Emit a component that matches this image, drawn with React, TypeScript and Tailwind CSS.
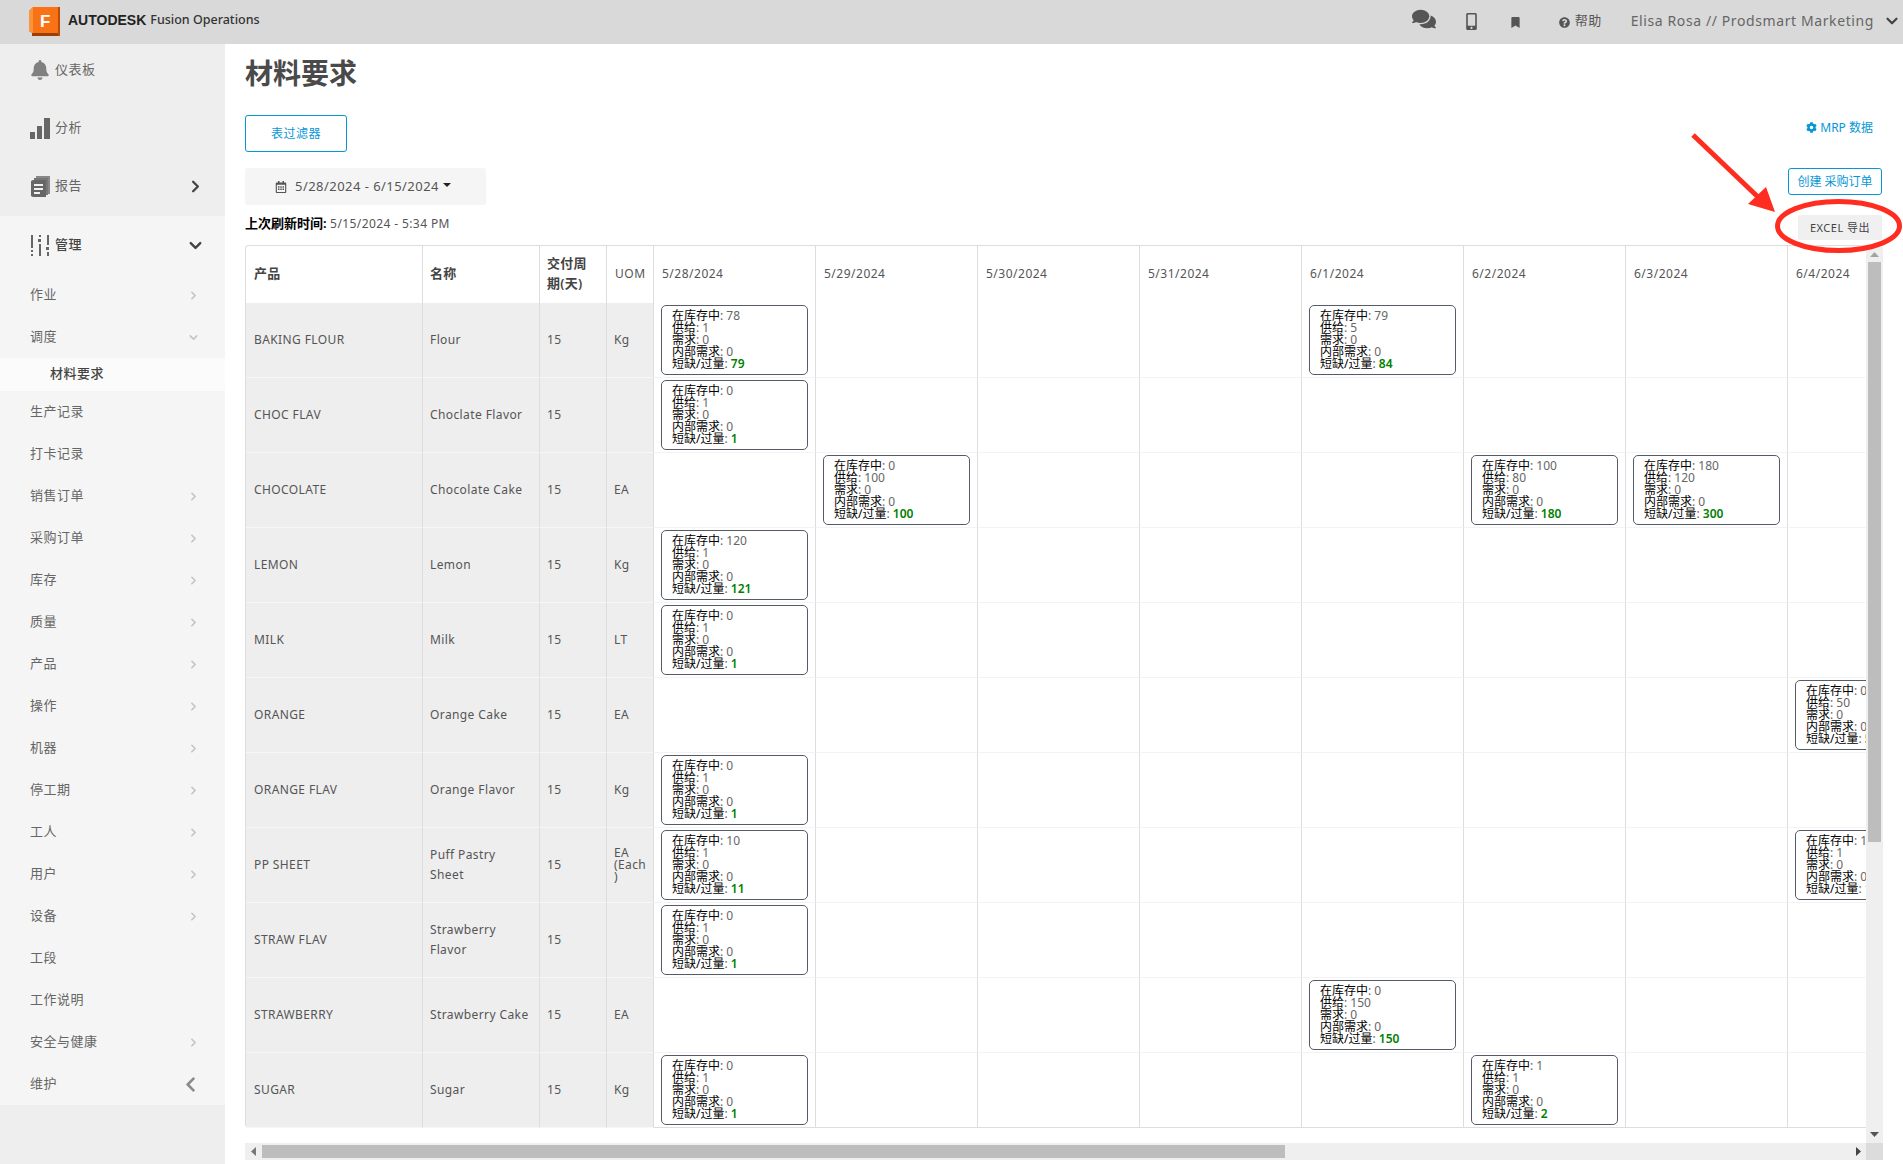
import { ChevronDown, ChevronRight } from 'lucide-react';
import {
  FaBell,
  FaBookmark,
  FaChevronLeft,
  FaCog,
  FaComments,
  FaMobileAlt,
  FaQuestionCircle,
  FaRegCalendarAlt,
} from 'react-icons/fa';

const FONT = { fontFamily: '"Noto Sans", "Noto Sans CJK SC", sans-serif' };

const DATES = ['5/28/2024', '5/29/2024', '5/30/2024', '5/31/2024', '6/1/2024', '6/2/2024', '6/3/2024', '6/4/2024', '6/5/2024'];

type Stock = [number, number, number, number, number];

interface Row {
  code: string;
  name: string;
  uom: string;
  cards: Record<string, Stock>;
}

const ROWS: Row[] = [
  { code: 'BAKING FLOUR', name: 'Flour', uom: 'Kg', cards: { '5/28/2024': [78, 1, 0, 0, 79], '6/1/2024': [79, 5, 0, 0, 84] } },
  { code: 'CHOC FLAV', name: 'Choclate Flavor', uom: '', cards: { '5/28/2024': [0, 1, 0, 0, 1] } },
  {
    code: 'CHOCOLATE',
    name: 'Chocolate Cake',
    uom: 'EA',
    cards: { '5/29/2024': [0, 100, 0, 0, 100], '6/2/2024': [100, 80, 0, 0, 180], '6/3/2024': [180, 120, 0, 0, 300] },
  },
  { code: 'LEMON', name: 'Lemon', uom: 'Kg', cards: { '5/28/2024': [120, 1, 0, 0, 121] } },
  { code: 'MILK', name: 'Milk', uom: 'LT', cards: { '5/28/2024': [0, 1, 0, 0, 1] } },
  { code: 'ORANGE', name: 'Orange Cake', uom: 'EA', cards: { '6/4/2024': [0, 50, 0, 0, 50] } },
  { code: 'ORANGE FLAV', name: 'Orange Flavor', uom: 'Kg', cards: { '5/28/2024': [0, 1, 0, 0, 1] } },
  { code: 'PP SHEET', name: 'Puff Pastry Sheet', uom: 'EA (Each)', cards: { '5/28/2024': [10, 1, 0, 0, 11], '6/4/2024': [11, 1, 0, 0, 12] } },
  { code: 'STRAW FLAV', name: 'Strawberry Flavor', uom: '', cards: { '5/28/2024': [0, 1, 0, 0, 1] } },
  { code: 'STRAWBERRY', name: 'Strawberry Cake', uom: 'EA', cards: { '6/1/2024': [0, 150, 0, 0, 150] } },
  { code: 'SUGAR', name: 'Sugar', uom: 'Kg', cards: { '5/28/2024': [0, 1, 0, 0, 1], '6/2/2024': [1, 1, 0, 0, 2] } },
];

const SUB_TOP = [
  { label: '作业', arrow: 'right' },
  { label: '调度', arrow: 'down' },
];

const SUB_BOTTOM = [
  { label: '生产记录' },
  { label: '打卡记录' },
  { label: '销售订单', arrow: 'right' },
  { label: '采购订单', arrow: 'right' },
  { label: '库存', arrow: 'right' },
  { label: '质量', arrow: 'right' },
  { label: '产品', arrow: 'right' },
  { label: '操作', arrow: 'right' },
  { label: '机器', arrow: 'right' },
  { label: '停工期', arrow: 'right' },
  { label: '工人', arrow: 'right' },
  { label: '用户', arrow: 'right' },
  { label: '设备', arrow: 'right' },
  { label: '工段' },
  { label: '工作说明' },
  { label: '安全与健康', arrow: 'right' },
];

const Logo = () => (
  <svg width="32" height="30" viewBox="0 0 32 30" className="mt-[2px]">
    <polygon points="0,4 4,0 30,0 30,26 3,26 0,24" fill="#f97316" />
    <polygon points="0,4 4,0 4,26 0,24" fill="#fb923c" />
    <polygon points="3,26 30,26 31,22 31,29 3,29" fill="#9a3f05" />
    <rect x="29" y="0" width="2" height="29" fill="#b84d08" />
    <text x="11" y="20" fill="#ffffff" fontSize="17" fontWeight="700" fontFamily="Liberation Sans, sans-serif">F</text>
  </svg>
);

const AnalyticsIcon = () => (
  <svg width="20" height="21" viewBox="0 0 20 21" fill="#666666">
    <rect x="0" y="14" width="5" height="7" />
    <rect x="7" y="8" width="5" height="13" />
    <rect x="14" y="0" width="6" height="21" />
  </svg>
);

const ReportIcon = () => (
  <svg width="19" height="21" viewBox="0 0 19 21" className="ml-px">
    <path d="M5 0h14v18h-2V2H5z" fill="#888888" />
    <path d="M3 2h14v17h-2V4H3z" fill="#777777" />
    <path d="M0 5l2-1h13v17H2l-2-1z" fill="#666666" />
    <rect x="3" y="8" width="9" height="2" fill="#f0f0f0" />
    <rect x="3" y="12" width="9" height="2" fill="#f0f0f0" />
    <rect x="3" y="16" width="6" height="2" fill="#f0f0f0" />
  </svg>
);

const SlidersIcon = () => (
  <svg width="18" height="21" viewBox="0 0 18 21" fill="#666666" className="ml-px">
    <rect x="0" y="0" width="2" height="13" />
    <rect x="0" y="15" width="2" height="2" />
    <rect x="0" y="19" width="2" height="2" />
    <rect x="8" y="0" width="2" height="2" />
    <rect x="7" y="4" width="3" height="3" />
    <rect x="8" y="9" width="2" height="12" />
    <rect x="16" y="0" width="2" height="10" />
    <rect x="15" y="12" width="3" height="3" />
    <rect x="16" y="17" width="2" height="4" />
  </svg>
);

const TopItem = ({ icon, label, arrow, bold }: { icon: React.ReactNode; label: string; arrow?: 'right' | 'down'; bold?: boolean }) => (
  <div className="flex h-[58px] items-center pl-[30px] pr-[20px]">
    <div className="flex w-[25px] items-center">{icon}</div>
    <span className={`flex-1 text-[13px] tracking-[0.5px] ${bold ? 'font-medium text-[#444444]' : 'text-[#666666]'}`}>{label}</span>
    {arrow === 'right' && <ChevronRight size={19} strokeWidth={3} className="text-[#444444]" />}
    {arrow === 'down' && <ChevronDown size={19} strokeWidth={3} className="text-[#444444]" />}
  </div>
);

const SubItem = ({ label, arrow }: { label: string; arrow?: string }) => (
  <div className="flex h-[42px] items-center pl-[30px] pr-[25px]">
    <span className="flex-1 text-[13px] tracking-[0.5px] text-[#666666]">{label}</span>
    {arrow === 'right' && <ChevronRight size={13} strokeWidth={3} className="text-[#c4c4c4]" />}
    {arrow === 'down' && <ChevronDown size={13} strokeWidth={3} className="text-[#c4c4c4]" />}
  </div>
);

const Sidebar = () => (
  <aside className="flex w-[225px] shrink-0 flex-col bg-[#eeeeee]">
    <div className="h-[172px]">
      <div className="-mt-[3px]">
        <TopItem icon={<FaBell size={20} className="text-[#808080]" />} label="仪表板" />
        <TopItem icon={<AnalyticsIcon />} label="分析" />
        <TopItem icon={<ReportIcon />} label="报告" arrow="right" />
      </div>
    </div>
    <div className="bg-[#f5f5f5]">
      <TopItem icon={<SlidersIcon />} label="管理" arrow="down" bold />
      {SUB_TOP.map((item) => (
        <SubItem key={item.label} {...item} />
      ))}
      <div className="flex h-[33px] items-center bg-[#fbfbfb] pb-[2px] pl-[50px] text-[13px] font-medium tracking-[0.5px] text-[#444444]">材料要求</div>
      {SUB_BOTTOM.map((item) => (
        <SubItem key={item.label} {...item} />
      ))}
      <div className="flex h-[42px] items-center pl-[30px] pr-[26px]">
        <span className="flex-1 text-[13px] tracking-[0.5px] text-[#666666]">维护</span>
        <FaChevronLeft size={17} className="text-[#8a8a8a]" />
      </div>
    </div>
  </aside>
);

const StockCard = ({ stock }: { stock: Stock }) => {
  const rows: [string, number][] = [
    ['在库存中', stock[0]],
    ['供给', stock[1]],
    ['需求', stock[2]],
    ['内部需求', stock[3]],
  ];
  return (
    <div className="h-[70px] w-[147px] rounded-[5px] border border-[#555c68] bg-white pl-[10px] pt-[4px] text-[12px] leading-[12px] text-[#666666]">
      {rows.map(([label, value]) => (
        <div key={label} className="whitespace-nowrap">
          <span className="text-black">{label}</span>: {value}
        </div>
      ))}
      <div className="whitespace-nowrap">
        <span className="text-black">短缺/过量</span>: <span className="font-semibold text-[#008000]">{stock[4]}</span>
      </div>
    </div>
  );
};

const HEAD = 'border-r border-[#dddddd] text-left align-middle leading-[20px]';
const HEAD_BOLD = `${HEAD} px-[7px] pb-[3px] text-[13px] font-semibold tracking-[0.3px] text-[#444444]`;
const HEAD_PLAIN = `${HEAD} px-[8px] pb-[1px] text-[12px] font-normal tracking-[0.5px] text-[#555555]`;
const FIXED = 'border-r border-b border-r-[#dddddd] border-b-[#f7f7f7] bg-[#eeeeee] pl-[7px] pr-[4px] align-middle text-[12px] leading-[20px] tracking-[0.4px] text-[#555555]';

const StockTable = () => (
  <div className="w-fit rounded-l-[4px] border-t border-l border-[#dddddd]">
    <table className="w-[1866px] table-fixed border-separate border-spacing-0" style={FONT}>
      <colgroup>
        <col className="w-[177px]" />
        <col className="w-[117px]" />
        <col className="w-[67px]" />
        <col className="w-[47px]" />
        {DATES.map((d) => (
          <col key={d} className="w-[162px]" />
        ))}
      </colgroup>
      <thead>
        <tr className="h-[57px]">
          <th className={`${HEAD_BOLD} !pl-[8px]`}>产品</th>
          <th className={HEAD_BOLD}>名称</th>
          <th className={HEAD_BOLD}>交付周期(天)</th>
          <th className={HEAD_PLAIN}>UOM</th>
          {DATES.map((d) => (
            <th key={d} className={HEAD_PLAIN}>{d}</th>
          ))}
        </tr>
      </thead>
      <tbody>
        {ROWS.map((row, i) => {
          const last = i === ROWS.length - 1;
          const bottom = last ? 'border-b-[#dddddd]' : '';
          return (
            <tr key={row.code} className="h-[75px]">
              <td className={`${FIXED} ${bottom} !pl-[8px]`}>{row.code}</td>
              <td className={`${FIXED} ${bottom} !pr-[9px]`}>{row.name}</td>
              <td className={`${FIXED} ${bottom}`}>15</td>
              <td className={`${FIXED} ${bottom} !leading-[12px] break-words`}>{row.uom}</td>
              {DATES.map((d) => (
                <td key={d} className={`border-r border-b border-r-[#dddddd] px-[7px] align-middle ${last ? 'border-b-[#dddddd]' : 'border-b-[#f3f3f3]'}`}>
                  {row.cards[d] && <StockCard stock={row.cards[d]} />}
                </td>
              ))}
            </tr>
          );
        })}
      </tbody>
    </table>
  </div>
);

const VScroll = () => (
  <div className="mt-[2px] flex w-[17px] shrink-0 flex-col items-center bg-[#efefef] pt-[5px]">
    <svg width="9" height="5" viewBox="0 0 9 5" fill="#a3a3a3"><polygon points="4.5,0 9,5 0,5" /></svg>
    <div className="mt-[5px] h-[580px] w-[13px] bg-[#bdbdbd]" />
    <div className="flex-1" />
    <svg width="9" height="5" viewBox="0 0 9 5" fill="#555555" className="mb-[6px]"><polygon points="0,0 9,0 4.5,5" /></svg>
  </div>
);

const HScroll = () => (
  <div className="flex h-[17px] shrink-0 items-center bg-[#efefef]">
    <svg width="5" height="9" viewBox="0 0 5 9" fill="#777777" className="ml-[6px]"><polygon points="5,0 5,9 0,4.5" /></svg>
    <div className="ml-[6px] h-[13px] w-[1023px] bg-[#bdbdbd]" />
    <div className="flex-1" />
    <svg width="5" height="9" viewBox="0 0 5 9" fill="#444444" className="mr-[5px]"><polygon points="0,0 5,4.5 0,9" /></svg>
    <div className="h-[17px] w-[17px] bg-[#dcdcdc]" />
  </div>
);

const Annotation = () => (
  <svg className="pointer-events-none absolute inset-0" width="1903" height="1164" viewBox="0 0 1903 1164">
    <ellipse cx="1838.5" cy="226" rx="61" ry="24.5" fill="none" stroke="#ff2d20" strokeWidth="5" />
    <line x1="1693" y1="135" x2="1758" y2="197" stroke="#ff2d20" strokeWidth="5" />
    <polygon points="1766,187 1748,204 1775,212" fill="#ff2d20" />
  </svg>
);

export default function App() {
  return (
    <div className="relative flex h-screen w-full flex-col overflow-hidden bg-white" style={FONT}>
      <header className="flex h-[44px] shrink-0 items-center bg-[#d9d9d9] pb-[3px] pl-[29px] pr-[2px]">
        <Logo />
        <span className="ml-[7px] text-[14px] font-bold text-[#222222]" style={{ fontFamily: '"Liberation Sans", sans-serif' }}>AUTODESK</span>
        <span className="ml-[4px] text-[12.5px] font-medium text-[#333333]">Fusion Operations</span>
        <div className="flex-1" />
        <FaComments size={24} className="mb-[3px] text-[#555555]" />
        <FaMobileAlt size={17} className="ml-[27px] mt-[2px] text-[#555555]" />
        <FaBookmark size={11} className="ml-[30px] mt-[3px] text-[#555555]" />
        <FaQuestionCircle size={11} className="ml-[38px] mt-[3px] text-[#555555]" />
        <span className="ml-[5px] text-[13px] tracking-[0.5px] text-[#555555]">帮助</span>
        <span className="ml-[29px] text-[14px] tracking-[0.6px] text-[#666666]">Elisa Rosa // Prodsmart Marketing</span>
        <ChevronDown size={18} strokeWidth={3} className="ml-[9px] text-[#444444]" />
      </header>

      <div className="flex min-h-0 flex-1">
        <Sidebar />
        <main className="flex min-w-0 flex-1 flex-col px-[20px]">
          <h1 className="flex h-[71px] shrink-0 items-center pb-[13px] text-[28px] font-bold text-[#4a4a4a]">材料要求</h1>

          <div className="flex h-[37px] shrink-0 items-center justify-between">
            <button className="h-[37px] w-[102px] rounded-[3px] border border-[#0696d7] text-[12px] tracking-[0.5px] text-[#0696d7]">表过滤器</button>
            <span className="mb-[12px] flex items-center gap-[3px] pr-[10px] text-[12px] text-[#0696d7]">
              <FaCog size={11} /> MRP 数据
            </span>
          </div>

          <div className="mt-[16px] flex h-[37px] shrink-0 items-start justify-between">
            <div className="flex h-[37px] w-[241px] items-center justify-center gap-[8px] rounded-[3px] bg-[#f5f5f5] pr-[5px] text-[13px] tracking-[0.45px] text-[#555555]">
              <FaRegCalendarAlt size={12} />
              <span>5/28/2024 - 6/15/2024</span>
              <span className="-ml-[4px] mb-[3px] h-0 w-0 border-x-[4px] border-t-[4px] border-x-transparent border-t-[#222222]" />
            </div>
            <button className="mr-px h-[27px] w-[94px] rounded-[3px] border border-[#0696d7] text-[12px] text-[#0696d7]">创建 采购订单</button>
          </div>

          <div className="flex h-[40px] shrink-0 items-center justify-between">
            <span className="mb-[2px] text-[12px] tracking-[0.4px] text-[#555555]">
              <span className="text-[13px] font-semibold tracking-normal text-black">上次刷新时间:</span> 5/15/2024 - 5:34 PM
            </span>
            <button className="mr-px mt-[5px] h-[25px] w-[84px] rounded-[2px] bg-[#f0f0f0] pt-[2px] text-[11px] tracking-[0.5px] text-[#444444]">EXCEL 导出</button>
          </div>

          <div className="flex min-h-0 flex-col" style={{ height: 915 }}>
            <div className="flex min-h-0 flex-1">
              <div className="min-w-0 flex-1 overflow-hidden">
                <StockTable />
              </div>
              <VScroll />
            </div>
            <HScroll />
          </div>
        </main>
      </div>
      <Annotation />
    </div>
  );
}
